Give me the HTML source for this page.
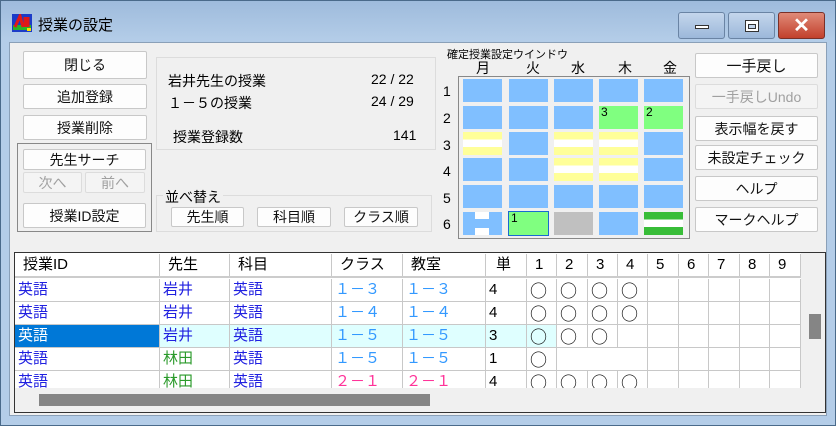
<!DOCTYPE html>
<html><head><meta charset="utf-8"><style>
*{margin:0;padding:0;box-sizing:border-box}
body{width:836px;height:426px;overflow:hidden;background:#a9c6e4;font-family:"Liberation Sans","Noto Sans CJK JP",sans-serif;position:relative}
.a{position:absolute}
.frame{left:0;top:0;width:836px;height:426px;background:linear-gradient(#9ebbdc,#b4cde8 40px,#b4cde8);border:1px solid #4a6a8a}
.client{left:9px;top:42px;width:818px;height:374px;background:#f0f0f0;border:1px solid #8aa0b8}
.btn{position:absolute;background:#fdfdfd;border:1px solid #c8c8c8;border-radius:2px;text-align:center;font-size:14px;color:#111;display:flex;align-items:center;justify-content:center}
.dis{color:#a0a0a0;background:#f4f4f4;border-color:#dcdcdc}
.cell{position:absolute;width:39px;height:23px;background:#80bfff}
.ys{background:linear-gradient(#ffff99 0 33%,#fff 33% 66%,#ffff99 66%)}
.gr{background:#80ff80;font-size:12px;line-height:13px;padding-left:2px}
.t{position:absolute;font-size:14px}
.row{position:absolute;left:15px;width:786px;height:23px;border-bottom:1px solid #c8c8c8}
.c{position:absolute;top:0;height:22px;border-right:1px solid #c8c8c8;font-size:15px;line-height:22px;padding-left:3px;white-space:nowrap}
.o{font-family:"Noto Sans CJK JP",sans-serif;font-size:17px;padding-left:3px;line-height:21px}
</style></head><body>
<div class="a frame"></div>
<svg class="a" style="left:12px;top:14px" width="20" height="18"><rect width="20" height="18" fill="#1c3cc8"/><rect x="1" y="11" width="18" height="5" fill="#28b428"/><path d="M3 13 L8 2 L11 13 M13 3 L13 13 M16 3 L16 13" stroke="#e01818" stroke-width="3" fill="none"/><rect x="15" y="14" width="4" height="3" fill="#ffe000"/></svg>
<div class="a" style="left:38px;top:14px;font-size:15px;color:#000">授業の設定</div>
<div class="a" style="left:678px;top:12px;width:47px;height:27px;border:1px solid #6a84a4;border-radius:3px;background:linear-gradient(#c4d6ec,#9cb8da)"><div class="a" style="left:16px;top:12px;width:14px;height:4px;background:#fff;border:1px solid #333"></div></div>
<div class="a" style="left:728px;top:12px;width:47px;height:27px;border:1px solid #6a84a4;border-radius:3px;background:linear-gradient(#c4d6ec,#9cb8da)"><div class="a" style="left:16px;top:7px;width:14px;height:12px;background:#fff;border:1px solid #333"><div class="a" style="left:2px;top:3px;width:8px;height:5px;border:1px solid #333;background:#c4d6ec"></div></div></div>
<div class="a" style="left:778px;top:12px;width:47px;height:27px;border:1px solid #7a3028;border-radius:3px;background:linear-gradient(#e08a78,#c2402c);color:#fff;font-size:20px;font-weight:bold;text-align:center;line-height:26px">✕</div>
<div class="a client"></div>

<div class="btn" style="left:23px;top:51px;width:124px;height:28px">閉じる</div>
<div class="btn" style="left:23px;top:84px;width:124px;height:25px">追加登録</div>
<div class="btn" style="left:23px;top:115px;width:124px;height:25px">授業削除</div>
<div class="a" style="left:17px;top:143px;width:135px;height:89px;border:1px solid #888"></div>
<div class="btn" style="left:23px;top:149px;width:123px;height:21px">先生サーチ</div>
<div class="btn dis" style="left:23px;top:172px;width:59px;height:21px">次へ</div>
<div class="btn dis" style="left:85px;top:172px;width:60px;height:21px">前へ</div>
<div class="btn" style="left:23px;top:203px;width:123px;height:25px">授業ID設定</div>

<div class="a" style="left:156px;top:57px;width:280px;height:93px;border:1px solid #dcdcdc;background:#f0f0f0"></div>
<div class="t" style="left:168px;top:71px">岩井先生の授業</div>
<div class="t" style="left:371px;top:71px">22 / 22</div>
<div class="t" style="left:168px;top:93px">１－５の授業</div>
<div class="t" style="left:371px;top:93px">24 / 29</div>
<div class="t" style="left:173px;top:127px">授業登録数</div>
<div class="t" style="left:393px;top:127px">141</div>

<div class="a" style="left:156px;top:195px;width:276px;height:37px;border:1px solid #dcdcdc"></div>
<div class="t" style="left:163px;top:187px;background:#f0f0f0;padding:0 2px">並べ替え</div>
<div class="btn" style="left:171px;top:207px;width:73px;height:20px">先生順</div>
<div class="btn" style="left:257px;top:207px;width:74px;height:20px">科目順</div>
<div class="btn" style="left:344px;top:207px;width:74px;height:20px">クラス順</div>

<div class="a" style="left:447px;top:46px;font-size:11px">確定授業設定ウインドウ</div>
<div class="t" style="left:476px;top:58px">月</div><div class="t" style="left:526px;top:58px">火</div><div class="t" style="left:571px;top:58px">水</div><div class="t" style="left:618px;top:58px">木</div><div class="t" style="left:663px;top:58px">金</div>
<div class="t" style="left:443px;top:83px">1</div><div class="t" style="left:443px;top:110px">2</div><div class="t" style="left:443px;top:137px">3</div><div class="t" style="left:443px;top:163px">4</div><div class="t" style="left:443px;top:190px">5</div><div class="t" style="left:443px;top:216px">6</div>
<div class="a" style="left:458px;top:76px;width:232px;height:163px;border:1px solid #888;background:#f0f0f0"></div>
<div class="cell" style="left:463px;top:79px"></div><div class="cell" style="left:509px;top:79px"></div><div class="cell" style="left:554px;top:79px"></div><div class="cell" style="left:599px;top:79px"></div><div class="cell" style="left:644px;top:79px"></div>
<div class="cell" style="left:463px;top:106px"></div><div class="cell" style="left:509px;top:106px"></div><div class="cell" style="left:554px;top:106px"></div><div class="cell gr" style="left:599px;top:106px">3</div><div class="cell gr" style="left:644px;top:106px">2</div>
<div class="cell ys" style="left:463px;top:132px"></div><div class="cell" style="left:509px;top:132px"></div><div class="cell ys" style="left:554px;top:132px"></div><div class="cell ys" style="left:599px;top:132px"></div><div class="cell" style="left:644px;top:132px"></div>
<div class="cell" style="left:463px;top:158px"></div><div class="cell" style="left:509px;top:158px"></div><div class="cell ys" style="left:554px;top:158px"></div><div class="cell ys" style="left:599px;top:158px"></div><div class="cell" style="left:644px;top:158px"></div>
<div class="cell" style="left:463px;top:185px"></div><div class="cell" style="left:509px;top:185px"></div><div class="cell" style="left:554px;top:185px"></div><div class="cell" style="left:599px;top:185px"></div><div class="cell" style="left:644px;top:185px"></div>
<div class="cell" style="left:463px;top:212px"><div class="a" style="left:12px;top:0;width:14px;height:7px;background:#fff"></div><div class="a" style="left:12px;top:16px;width:14px;height:7px;background:#fff"></div></div>
<div class="cell gr" style="left:508px;top:211px;width:41px;height:25px;border:1px solid #1a6ad0">1</div>
<div class="cell" style="left:554px;top:212px;background:#c0c0c0"></div>
<div class="cell" style="left:599px;top:212px"></div>
<div class="cell" style="left:644px;top:212px;background:linear-gradient(#38bd38 0 33%,#fff 33% 66%,#38bd38 66%)"></div>

<div class="btn" style="left:695px;top:53px;width:123px;height:25px;font-size:15px">一手戻し</div>
<div class="btn dis" style="left:695px;top:84px;width:123px;height:25px">一手戻しUndo</div>
<div class="btn" style="left:695px;top:116px;width:123px;height:25px">表示幅を戻す</div>
<div class="btn" style="left:695px;top:145px;width:123px;height:25px">未設定チェック</div>
<div class="btn" style="left:695px;top:176px;width:123px;height:25px">ヘルプ</div>
<div class="btn" style="left:695px;top:207px;width:123px;height:25px">マークヘルプ</div>

<div class="a" style="left:14px;top:252px;width:812px;height:161px;border:1px solid #333;background:#f0f0f0"></div>
<div class="a" style="left:15px;top:253px;width:786px;height:135px;background:#fff"></div>
<div class="row" style="top:254px;height:24px;border-bottom:2px solid #ccc">
<div class="c" style="left:0;width:145px;padding-left:8px">授業ID</div><div class="c" style="left:145px;width:70px;padding-left:8px">先生</div><div class="c" style="left:215px;width:102px;padding-left:8px">科目</div><div class="c" style="left:317px;width:71px;padding-left:8px">クラス</div><div class="c" style="left:388px;width:83px;padding-left:8px">教室</div><div class="c" style="left:471px;width:41px;padding-left:10px">単</div><div class="c" style="left:512px;width:30px;padding-left:8px">1</div><div class="c" style="left:542px;width:31px;padding-left:8px">2</div><div class="c" style="left:573px;width:30px;padding-left:8px">3</div><div class="c" style="left:603px;width:30px;padding-left:8px">4</div><div class="c" style="left:633px;width:31px;padding-left:8px">5</div><div class="c" style="left:664px;width:30px;padding-left:8px">6</div><div class="c" style="left:694px;width:31px;padding-left:8px">7</div><div class="c" style="left:725px;width:30px;padding-left:8px">8</div><div class="c" style="left:755px;width:31px;padding-left:8px">9</div></div>

<div class="row" style="top:279px"><div class="c" style="left:0;width:145px;color:#2020e0">英語</div><div class="c" style="left:145px;width:70px;color:#2020e0">岩井</div><div class="c" style="left:215px;width:102px;color:#2020e0">英語</div><div class="c" style="left:317px;width:71px;color:#3399ff">１－３</div><div class="c" style="left:388px;width:83px;color:#3399ff">１－３</div><div class="c" style="left:471px;width:41px">4</div><div class="c o" style="left:512px;width:30px">○</div><div class="c o" style="left:542px;width:31px">○</div><div class="c o" style="left:573px;width:30px">○</div><div class="c o" style="left:603px;width:30px">○</div><div class="c" style="left:633px;width:31px"></div><div class="c" style="left:664px;width:30px"></div><div class="c" style="left:694px;width:31px"></div><div class="c" style="left:725px;width:30px"></div><div class="c" style="left:755px;width:31px"></div></div>
<div class="row" style="top:302px"><div class="c" style="left:0;width:145px;color:#2020e0">英語</div><div class="c" style="left:145px;width:70px;color:#2020e0">岩井</div><div class="c" style="left:215px;width:102px;color:#2020e0">英語</div><div class="c" style="left:317px;width:71px;color:#3399ff">１－４</div><div class="c" style="left:388px;width:83px;color:#3399ff">１－４</div><div class="c" style="left:471px;width:41px">4</div><div class="c o" style="left:512px;width:30px">○</div><div class="c o" style="left:542px;width:31px">○</div><div class="c o" style="left:573px;width:30px">○</div><div class="c o" style="left:603px;width:30px">○</div><div class="c" style="left:633px;width:31px"></div><div class="c" style="left:664px;width:30px"></div><div class="c" style="left:694px;width:31px"></div><div class="c" style="left:725px;width:30px"></div><div class="c" style="left:755px;width:31px"></div></div>
<div class="row" style="top:325px"><div class="c" style="left:0;width:145px;background:#0078d7;color:#fff">英語</div><div class="c" style="left:145px;width:70px;color:#2020e0;background:#dfffff">岩井</div><div class="c" style="left:215px;width:102px;color:#2020e0;background:#dfffff">英語</div><div class="c" style="left:317px;width:71px;color:#3399ff;background:#dfffff">１－５</div><div class="c" style="left:388px;width:83px;color:#3399ff;background:#dfffff">１－５</div><div class="c" style="left:471px;width:41px;background:#dfffff">3</div><div class="c o" style="left:512px;width:30px;background:#dfffff">○</div><div class="c o" style="left:542px;width:31px">○</div><div class="c o" style="left:573px;width:30px">○</div><div class="c" style="left:603px;width:30px"></div><div class="c" style="left:633px;width:31px"></div><div class="c" style="left:664px;width:30px"></div><div class="c" style="left:694px;width:31px"></div><div class="c" style="left:725px;width:30px"></div><div class="c" style="left:755px;width:31px"></div></div>
<div class="row" style="top:348px"><div class="c" style="left:0;width:145px;color:#2020e0">英語</div><div class="c" style="left:145px;width:70px;color:#2a9a2a">林田</div><div class="c" style="left:215px;width:102px;color:#2020e0">英語</div><div class="c" style="left:317px;width:71px;color:#3399ff">１－５</div><div class="c" style="left:388px;width:83px;color:#3399ff">１－５</div><div class="c" style="left:471px;width:41px">1</div><div class="c o" style="left:512px;width:30px">○</div><div class="c" style="left:542px;width:31px;border-right:none"></div><div class="c" style="left:573px;width:30px;border-right:none"></div><div class="c" style="left:603px;width:30px"></div><div class="c" style="left:633px;width:31px"></div><div class="c" style="left:664px;width:30px"></div><div class="c" style="left:694px;width:31px"></div><div class="c" style="left:725px;width:30px"></div><div class="c" style="left:755px;width:31px"></div></div>
<div class="row" style="top:371px;height:17px;border:none;overflow:hidden"><div class="c" style="left:0;width:145px;color:#2020e0">英語</div><div class="c" style="left:145px;width:70px;color:#2a9a2a">林田</div><div class="c" style="left:215px;width:102px;color:#2020e0">英語</div><div class="c" style="left:317px;width:71px;color:#ff3399">２－１</div><div class="c" style="left:388px;width:83px;color:#ff3399">２－１</div><div class="c" style="left:471px;width:41px">4</div><div class="c o" style="left:512px;width:30px">○</div><div class="c o" style="left:542px;width:31px">○</div><div class="c o" style="left:573px;width:30px">○</div><div class="c o" style="left:603px;width:30px">○</div><div class="c" style="left:633px;width:31px"></div><div class="c" style="left:664px;width:30px"></div><div class="c" style="left:694px;width:31px"></div><div class="c" style="left:725px;width:30px"></div><div class="c" style="left:755px;width:31px"></div></div>
<div class="a" style="left:39px;top:394px;width:391px;height:12px;background:#858585"></div>
<div class="a" style="left:809px;top:314px;width:12px;height:25px;background:#858585"></div>
</body></html>
